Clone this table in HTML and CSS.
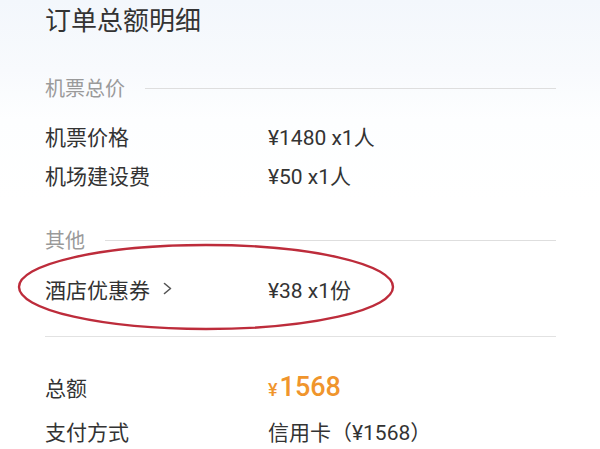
FILE: index.html
```html
<!DOCTYPE html>
<html lang="zh-CN">
<head>
<meta charset="utf-8">
<title>订单总额明细</title>
<link rel="stylesheet" href="styles.css">
</head>
<body>
<div class="page">
  <div class="title">订单总额明细</div>

  <div class="section sec-first">
    <span class="section-label">机票总价</span>
    <span class="section-line"></span>
  </div>
  <div class="row row-first">
    <span class="label">机票价格</span>
    <span class="value">¥1480 x1人</span>
  </div>
  <div class="row">
    <span class="label">机场建设费</span>
    <span class="value">¥50 x1人</span>
  </div>

  <div class="section sec-second">
    <span class="section-label">其他</span>
    <span class="section-line"></span>
  </div>
  <div class="row row-coupon">
    <span class="label">酒店优惠券 <span class="chev"><svg width="9" height="13" viewBox="0 0 9 13"><path d="M1.5 1.5 L7.5 6.5 L1.5 11.5" fill="none" stroke="#555" stroke-width="1.6" stroke-linecap="round" stroke-linejoin="round"/></svg></span></span>
    <span class="value">¥38 x1份</span>
  </div>

  <div class="divider"></div>

  <div class="row row-total">
    <span class="label">总额</span>
    <span class="value total"><span class="yen">¥</span>1568</span>
  </div>
  <div class="row row-pay">
    <span class="label">支付方式</span>
    <span class="value">信用卡（¥1568）</span>
  </div>

  <svg class="circle" width="400" height="100" viewBox="0 0 400 100">
    <ellipse cx="201" cy="49" rx="187" ry="42" fill="none" stroke="#bd2c3b" stroke-width="2.4"/>
  </svg>
</div>
</body>
</html>
```

FILE: styles.css
```css
html, body {
  margin: 0;
  padding: 0;
}
body {
  width: 600px;
  height: 449px;
  overflow: hidden;
  background: linear-gradient(180deg, #f3f7fc 0px, #f8fafd 70px, #fdfeff 120px, #ffffff 200px);
  font-family: "Noto Sans CJK SC", "Noto Sans", sans-serif;
  color: #333;
}
.page {
  position: relative;
  padding: 0 44px 0 45px;
}
.title {
  height: 38px;
  line-height: 38px;
  font-size: 26px;
  color: #333;
}
.section {
  display: flex;
  align-items: center;
  height: 40px;
}
.sec-first {
  margin-top: 30px;
}
.sec-second {
  margin-top: 26px;
}
.section-label {
  font-size: 20px;
  color: #9a9a9a;
  line-height: 40px;
}
.section-line {
  flex: 1;
  height: 1px;
  background: #dedede;
  margin-left: 20px;
}
.row {
  display: flex;
  align-items: center;
  height: 39px;
  font-size: 21px;
}
.row-first {
  margin-top: 8px;
}
.row-coupon {
  margin-top: 9px;
}
.row-total {
  margin-top: 30px;
}
.row-pay {
  margin-top: 5px;
}
.label {
  width: 223px;
  flex: none;
  display: flex;
  align-items: center;
}
.chev {
  display: inline-flex;
  margin-left: 13px;
}
.value {
  color: #333;
  font-family: Roboto, "Noto Sans CJK SC", sans-serif;
}
.total {
  color: #f0952c;
  font-size: 27px;
  font-weight: 500;
}
.yen {
  font-size: 18px;
  margin-right: 2px;
}
.divider {
  margin-top: 28px;
  height: 1px;
  background: #e2e2e2;
}
.circle {
  position: absolute;
  left: 5px;
  top: 238px;
}
```
